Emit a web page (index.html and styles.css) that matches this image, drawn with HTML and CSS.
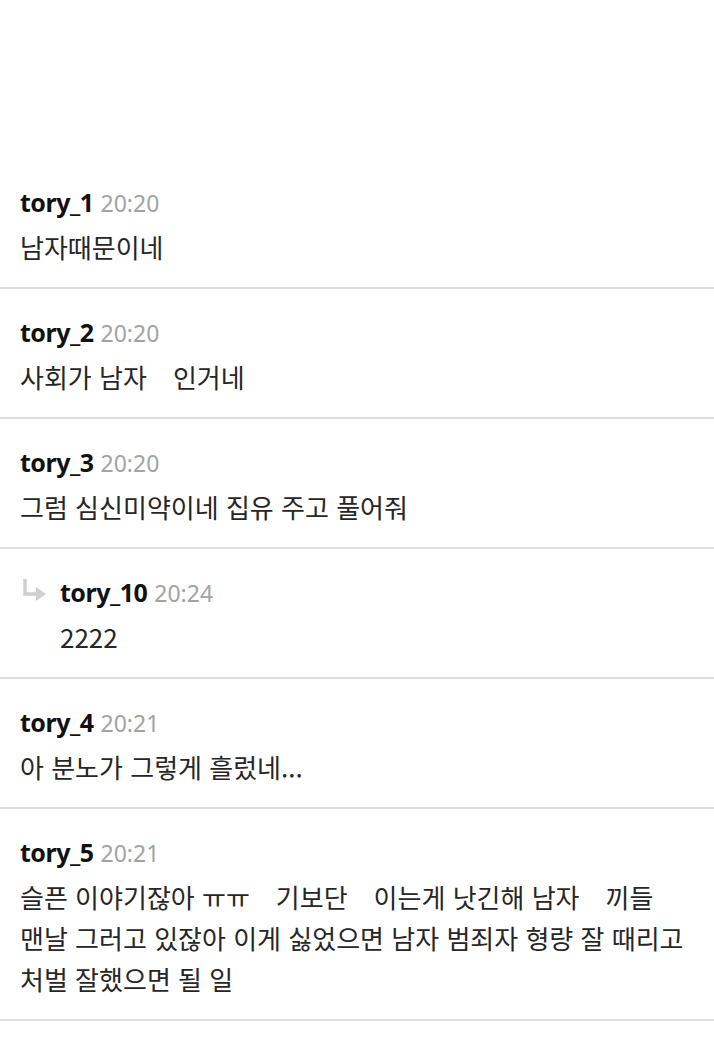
FILE: index.html
```html
<!DOCTYPE html>
<html lang="ko">
  <head>
    <meta charset="utf-8">
    <title>댓글</title>
    <link rel="stylesheet" href="styles.css">
  </head>
  <body>
    <div class="top"></div>
    <ul class="comments">
      <li class="comment">
        <div class="meta"><span class="name">tory_1</span><span class="time">20:20</span></div>
        <p class="text">남자때문이네</p>
      </li>
      <li class="comment">
        <div class="meta"><span class="name">tory_2</span><span class="time">20:20</span></div>
        <p class="text">사회가 남자&emsp;인거네</p>
      </li>
      <li class="comment">
        <div class="meta"><span class="name">tory_3</span><span class="time">20:20</span></div>
        <p class="text">그럼 심신미약이네 집유 주고 풀어줘</p>
      </li>
      <li class="comment reply">
        <svg class="reply-icon" width="26" height="26" viewBox="0 0 26 26">
          <path d="M3 1 V16 H16" fill="none" stroke="#cfcfcf" stroke-width="3.5"/>
          <path d="M14 9 L24 16 L14 23 Z" fill="#cfcfcf"/>
        </svg>
        <div class="body">
          <div class="meta"><span class="name">tory_10</span><span class="time">20:24</span></div>
          <p class="text">2222</p>
        </div>
      </li>
      <li class="comment">
        <div class="meta"><span class="name">tory_4</span><span class="time">20:21</span></div>
        <p class="text">아 분노가 그렇게 흘렀네...</p>
      </li>
      <li class="comment">
        <div class="meta"><span class="name">tory_5</span><span class="time">20:21</span></div>
        <p class="text">슬픈 이야기잖아 ㅠㅠ&emsp;기보단&emsp;이는게 낫긴해 남자&emsp;끼들 맨날 그러고 있잖아 이게 싫었으면 남자 범죄자 형량 잘 때리고 처벌 잘했으면 될 일</p>
      </li>
    </ul>
  </body>
</html>
```

FILE: styles.css
```css
html {
    background: white;
}

body {
    margin: 0;
    font-family: "Noto Sans CJK KR", "Noto Sans", sans-serif;
    color: #222;
}

.top {
    height: 159px;
}

.comments {
    list-style: none;
    margin: 0;
    padding: 0;
}

.comment {
    padding: 27px 20px 20px;
    border-bottom: 2px solid #dedede;
}

.reply {
    display: flex;
    align-items: flex-start;
}

.reply-icon {
    flex: none;
    margin: 2px 12px 0 2px;
}

.meta {
    height: 32px;
    line-height: 32px;
    white-space: nowrap;
    font-family: "Noto Sans", "Noto Sans CJK KR", sans-serif;
}

.name {
    font-size: 25px;
    font-weight: 700;
    color: #111;
    letter-spacing: -0.5px;
}

.time {
    font-size: 23px;
    color: #a3a3a3;
    margin-left: 7px;
}

.text {
    margin: 8px 0 0;
    font-size: 26px;
    line-height: 41px;
    color: #262626;
    word-break: keep-all;
}
```
